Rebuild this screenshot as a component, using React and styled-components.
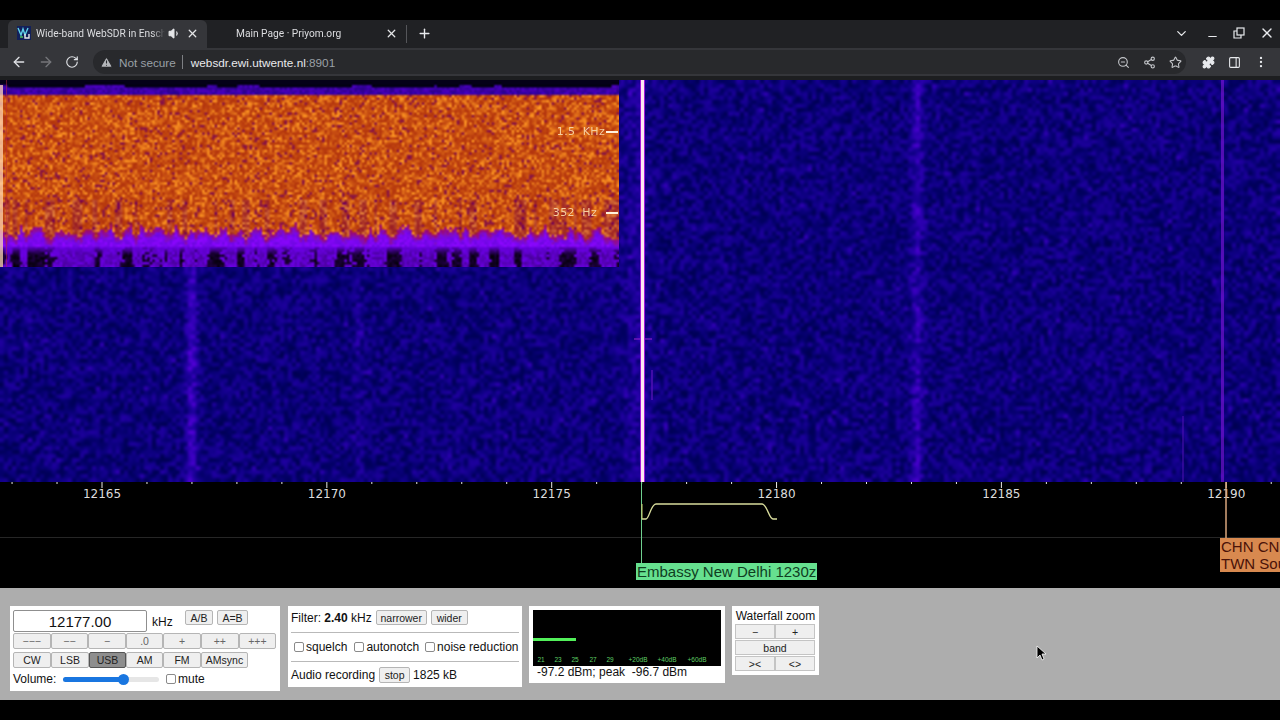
import React, { useEffect, useRef } from 'react';
import styled, { createGlobalStyle } from 'styled-components';
import {
  ArrowLeft,
  ArrowRight,
  RotateCw,
  TriangleAlert,
  ZoomOut,
  Share2,
  Star,
  Puzzle,
  PanelRight,
  EllipsisVertical,
  X,
  Plus,
  ChevronDown,
  Minus,
  Volume1,
} from 'lucide-react';

const GlobalStyle = createGlobalStyle`
  html, body { margin: 0; padding: 0; background: #000; }
  body { font-family: "Liberation Sans", Arial, sans-serif; overflow: hidden; }
  * { box-sizing: border-box; }
`;

const Screen = styled.div`
  position: relative;
  width: 1280px;
  height: 720px;
  display: flex;
  flex-direction: column;
  background: #000;
  padding: 20px 0;
`;

const TabStrip = styled.div`
  height: 28px;
  flex: none;
  display: flex;
  align-items: stretch;
  background: #202124;
  padding-left: 8px;
  color: #dcdde0;
  font-family: Roboto, "Liberation Sans", sans-serif;
  font-size: 10.2px;
`;

const Tab = styled.div`
  width: ${p => p.$width}px;
  display: flex;
  align-items: center;
  padding: 0 8px 2px 9px;
  border-radius: 6px 6px 0 0;
  background: ${p => (p.$active ? '#35363a' : 'transparent')};
`;

const Favicon = styled.svg`
  width: 14px;
  height: 14px;
  flex: none;
  margin-right: 5px;
`;

const TabTitle = styled.span`
  flex: 1;
  overflow: hidden;
  white-space: nowrap;
  margin-left: ${p => p.$indent || 0}px;
  mask-image: linear-gradient(to right, #000 90%, transparent);
`;

const TabIcon = styled.span`
  display: flex;
  margin-left: ${p => p.$gap || 0}px;
  color: #e4e5e8;
`;

const TabDivider = styled.div`
  width: 1px;
  height: 18px;
  align-self: center;
  background: #55565a;
`;

const NewTab = styled.div`
  display: flex;
  align-items: center;
  padding-bottom: 2px;
  margin-left: 10px;
  color: #e8eaed;
`;

const WindowControls = styled.div`
  margin-left: auto;
  display: flex;
  align-items: center;
  gap: 13px;
  padding: 0 5px 2px 0;
  color: #e8eaed;
`;

const MinimizeIcon = styled(Minus)`
  margin: 6px 0 0 4px;
`;

const RestoreIcon = styled.svg`
  width: 14px;
  height: 14px;
`;

const Toolbar = styled.div`
  height: 28px;
  flex: none;
  display: flex;
  align-items: center;
  background: #35363a;
  padding: 0 11px;
  color: #e8eaed;
`;

const NavButton = styled.span`
  display: flex;
  width: 27px;
  color: ${p => (p.$dim ? '#75767a' : '#dfe1e5')};
`;

const Omnibox = styled.div`
  width: 1093px;
  height: 24px;
  margin-left: 1px;
  display: flex;
  align-items: center;
  border-radius: 12px;
  background: #28292c;
  padding: 0 4px 0 7px;
  font-size: 11.75px;
`;

const WarnIcon = styled(TriangleAlert)`
  margin-right: 6px;
`;

const Muted = styled.span`
  color: #9aa0a6;
`;

const Host = styled.span`
  color: #e8eaed;
`;

const UrlSep = styled.span`
  width: 1px;
  height: 14px;
  margin: 0 8px 0 6px;
  background: #7d7f83;
`;

const OmniIcons = styled.div`
  margin-left: auto;
  display: flex;
  align-items: center;
  gap: 13px;
  color: #c4c6ca;
`;

const ToolbarEnd = styled.div`
  display: flex;
  align-items: center;
  gap: 13px;
  margin-left: 16px;
  color: #e8eaed;
`;

const ChromeEdge = styled.div`
  height: 4px;
  flex: none;
  background: #1d1e20;
`;

const Waterfall = styled.div`
  position: relative;
  height: 402px;
  flex: none;
  background: #0a006e;
`;

const FullCanvas = styled.canvas`
  display: block;
  width: 1280px;
  height: 402px;
`;

const AudioCanvas = styled.canvas`
  position: absolute;
  left: 0;
  top: 0;
  width: 619px;
  height: 187px;
`;

const AudioLabel = styled.div`
  position: absolute;
  right: ${p => p.$right}px;
  top: ${p => p.$top}px;
  color: #f6cfa0;
  font-family: "DejaVu Sans", sans-serif;
  font-size: 11px;
  letter-spacing: 0.3px;
  white-space: pre;
  line-height: 13px;
`;

const AudioTick = styled.div`
  position: absolute;
  left: ${p => p.$left}px;
  top: ${p => p.$top}px;
  width: ${p => p.$width}px;
  height: 2px;
  background: #fff2dc;
`;

const ScaleArea = styled.div`
  position: relative;
  height: 106px;
  flex: none;
  background: #000;
`;

const ScaleSvg = styled.svg`
  display: block;
  width: 1280px;
  height: 106px;
`;

const StationTag = styled.div`
  position: absolute;
  overflow: hidden;
  white-space: pre;
  font-size: 15px;
  line-height: 17px;
  left: ${p => p.$left}px;
  top: ${p => p.$top}px;
  padding: ${p => p.$pad};
  color: ${p => p.$color};
  background: ${p => p.$bg};
`;

const ControlBar = styled.div`
  flex: 1;
  display: flex;
  align-items: flex-start;
  gap: 7px;
  background: #adadad;
  padding: 18px 0 0 10px;
  color: #111;
  font-size: 12px;
`;

const Panel = styled.div`
  width: ${p => p.$width}px;
  height: ${p => p.$height}px;
  padding: ${p => p.$pad};
  margin-left: ${p => p.$left || 0}px;
  background: #fff;
  display: flex;
  flex-direction: column;
  flex: none;
`;

const Row = styled.div`
  display: flex;
  align-items: ${p => p.$align || 'center'};
  height: ${p => p.$height}px;
  margin-top: ${p => p.$top || 0}px;
  white-space: nowrap;
`;

const FreqInput = styled.input`
  width: 134px;
  height: 22px;
  border: 1px solid #8f8f8f;
  border-radius: 2px;
  background: #fff;
  text-align: center;
  color: #111;
  font: 15px "Liberation Sans", Arial, sans-serif;
  padding: 0;
  outline: none;
`;

const Unit = styled.span`
  margin: 5px 0 0 5px;
  font-size: 12px;
  width: 33px;
`;

const Btn = styled.button`
  width: ${p => p.$width}px;
  height: ${p => p.$height || 16}px;
  flex: none;
  padding: 0;
  margin-left: ${p => p.$left || 0}px;
  border: 1px solid ${p => (p.$on ? '#555' : '#b5b5b5')};
  border-radius: 2px;
  background: ${p => (p.$on ? '#8e8e8e' : '#efefef')};
  color: ${p => (p.$dim ? '#666' : '#222')};
  font: 10.5px "Liberation Sans", Arial, sans-serif;
  white-space: nowrap;
`;

const VolumeLabel = styled.span`
  width: 50px;
`;

const SliderTrack = styled.div`
  position: relative;
  width: 96px;
  height: 5px;
  border-radius: 3px;
  background: #e6e6e6;
`;

const SliderFill = styled.div`
  height: 5px;
  border-radius: 3px;
  background: #1976e0;
`;

const SliderThumb = styled.div`
  position: absolute;
  top: -3px;
  width: 11px;
  height: 11px;
  border-radius: 50%;
  background: #1976e0;
`;

const Check = styled.input.attrs({ type: 'checkbox' })`
  width: 10px;
  height: 10px;
  margin: 0 2px 0 ${p => p.$left || 0}px;
  flex: none;
  appearance: none;
  border: 1px solid #8a8a8a;
  border-radius: 2px;
  background: #fff;
`;

const Rule = styled.div`
  height: 1px;
  flex: none;
  background: #b9b9b9;
  margin: ${p => p.$margin};
`;

const RecordSize = styled.span`
  margin-left: 3px;
`;

const Meter = styled.div`
  position: relative;
  width: 188px;
  height: 56px;
  flex: none;
  background: #000;
`;

const MeterBar = styled.div`
  position: absolute;
  left: 0;
  top: 28px;
  width: 43px;
  height: 3px;
  background: #52f05a;
`;

const MeterScale = styled.svg`
  position: absolute;
  left: 0;
  top: 44px;
  width: 188px;
  height: 12px;
`;

const MeterText = styled.div`
  margin: 0 0 0 4px;
  height: 13px;
  line-height: 13px;
  white-space: pre;
`;

const ZoomTitle = styled.div`
  text-align: center;
  line-height: 15px;
  white-space: nowrap;
`;

const ZoomGrid = styled.div`
  display: grid;
  grid-template-columns: 40px 40px;
  grid-auto-rows: 15px;
  gap: 1px 0;
`;

const ZoomBtn = styled.button`
  grid-column: ${p => (p.$wide ? '1 / 3' : 'auto')};
  padding: 0;
  border: 1px solid #c4c4c4;
  background: #efefef;
  color: #222;
  font: 10.5px "Liberation Sans", Arial, sans-serif;
`;

const Pointer = styled.svg`
  position: absolute;
  left: 1036px;
  top: 645px;
  width: 10px;
  height: 16px;
`;

// small seeded generator so the noise is the same on every load
const makeRandom = seed => () => {
  seed = (seed * 1664525 + 1013904223) % 4294967296;
  return seed / 4294967296;
};

const clamp = v => Math.max(0, Math.min(255, v));

const bump = (x, center, width) => Math.exp(-((x - center) * (x - center)) / (2 * width * width));

function paintWaterfall(canvas) {
  const ctx = canvas.getContext('2d');
  const rnd = makeRandom(42);
  const scale = 4;
  const w = Math.ceil(1280 / scale);
  const h = Math.ceil(402 / scale);
  const small = document.createElement('canvas');
  small.width = w;
  small.height = h;
  const sctx = small.getContext('2d');
  const img = sctx.createImageData(w, h);
  for (let y = 0; y < h; y++) {
    for (let x = 0; x < w; x++) {
      const px = x * scale;
      const n = rnd();
      let level = 0.1 + n * 0.34;
      if (rnd() < 0.03) level += 0.12;
      level += 0.32 * bump(px, 190, 4);
      level += 0.1 * bump(px, 357, 3);
      level += 0.24 * bump(px, 915, 4);
      level += 0.12 * bump(px, 634, 10);
      const i = (y * w + x) * 4;
      img.data[i] = clamp(level * level * 170 - 3);
      img.data[i + 1] = 0;
      img.data[i + 2] = clamp(62 + level * 215);
      img.data[i + 3] = 255;
    }
  }
  sctx.putImageData(img, 0, 0);
  ctx.imageSmoothingEnabled = true;
  ctx.imageSmoothingQuality = 'high';
  ctx.drawImage(small, 0, 0, 1280, 402);

  // carriers and short traces
  ctx.fillStyle = 'rgba(120,20,210,0.65)';
  ctx.fillRect(1221, 0, 3, 402);
  ctx.fillStyle = 'rgba(80,15,180,0.5)';
  ctx.fillRect(1182, 336, 2, 66);
  ctx.fillStyle = 'rgba(95,20,190,0.6)';
  ctx.fillRect(651, 290, 2, 30);
  ctx.fillStyle = 'rgba(120,25,190,0.7)';
  ctx.fillRect(634, 258, 18, 2);
  ctx.fillStyle = '#a218d8';
  ctx.fillRect(640, 0, 5, 402);
  ctx.fillStyle = '#ffe6f2';
  ctx.fillRect(641, 0, 3, 402);
}

function smoothNoise(rnd, length, step) {
  const knots = [];
  for (let i = 0; i <= length / step + 1; i++) knots.push(rnd());
  const out = [];
  for (let x = 0; x < length; x++) {
    const a = Math.floor(x / step);
    const t = x / step - a;
    out.push(knots[a] * (1 - t) + knots[a + 1] * t);
  }
  return out;
}

function paintAudio(canvas) {
  const ctx = canvas.getContext('2d');
  const rnd = makeRandom(7);
  const w = 619;
  const h = 187;
  const scale = 2.5;
  const sw = Math.ceil(w / scale);
  const sh = Math.ceil(h / scale);
  const wave = smoothNoise(rnd, sw, 2);
  const holes = smoothNoise(rnd, sw, 3);
  const lid = smoothNoise(rnd, sw, 6);
  const small = document.createElement('canvas');
  small.width = sw;
  small.height = sh;
  const sctx = small.getContext('2d');
  const img = sctx.createImageData(sw, sh);
  for (let y = 0; y < sh; y++) {
    const py = y * scale;
    for (let x = 0; x < sw; x++) {
      const i = (y * sw + x) * 4;
      const n = rnd();
      const top = 144 + wave[x] * 14 + (n - 0.5) * 5;
      let r, g, b;
      if (py < 4 + lid[x] * 3) {
        r = 4; g = 0; b = 24;
      } else if (py < 15) {
        r = 45 + n * 30; g = 0; b = 140 + n * 50;
      } else if (py < top) {
        const k = n * n * n;
        r = 178 + n * 22 + k * 50;
        g = 52 + n * 24 + k * 70;
        b = 14 + k * 20;
        if (n < 0.08) {
          r = 142; g = 24; b = 62;
        }
        if (py > 118 && wave[x] > 0.65) {
          r -= 25; g -= 22; b += 22;
        }
      } else if (py < top + 7) {
        r = 160 - (py - top) * 6; g = 12; b = 100 + (py - top) * 18;
      } else if (py < 167) {
        r = 110 + n * 30; g = 6; b = 225 + n * 30;
      } else {
        const depth = Math.min(1, (py - 165) / 9);
        const hole = holes[x] + (n - 0.5) * 0.3 > 0.55 ? depth * (0.95 - n * 0.25) : depth * 0.3 * n;
        r = 105 * (1 - hole); g = 0; b = 225 * (1 - hole);
      }
      img.data[i] = r;
      img.data[i + 1] = g;
      img.data[i + 2] = b;
      img.data[i + 3] = 255;
    }
  }
  sctx.putImageData(img, 0, 0);
  ctx.imageSmoothingEnabled = true;
  ctx.imageSmoothingQuality = 'high';
  ctx.drawImage(small, 0, 0, w, h);
  ctx.fillStyle = 'rgba(255,215,180,0.75)';
  ctx.fillRect(0, 5, 3, 182);
  ctx.fillStyle = 'rgba(190,40,60,0.5)';
  ctx.fillRect(6, 0, 1, 187);
}

const freqLabels = [12165, 12170, 12175, 12180, 12185, 12190];
const tuneRow = ['−−−', '−−', '−', '.0', '+', '++', '+++'];
const modes = [
  { name: 'CW', width: 38 },
  { name: 'LSB', width: 38 },
  { name: 'USB', width: 37, on: true },
  { name: 'AM', width: 37 },
  { name: 'FM', width: 38 },
  { name: 'AMsync', width: 47 },
];
const meterLabels = [
  [8, '21'], [25, '23'], [42, '25'], [60, '27'], [77, '29'],
  [105, '+20dB'], [134, '+40dB'], [164, '+60dB'],
];
const volume = 0.63;

function frequencyToX(f) {
  return 102 + (f - 12165) * 44.97;
}

export default function App() {
  const waterfallRef = useRef(null);
  const audioRef = useRef(null);

  useEffect(() => {
    paintWaterfall(waterfallRef.current);
    paintAudio(audioRef.current);
  }, []);

  const ticks = [];
  for (let f = 12163; f <= 12191; f++) ticks.push(f);

  return (
    <Screen>
      <GlobalStyle />
      <TabStrip>
        <Tab $active $width={199}>
          <Favicon viewBox="0 0 14 14">
            <rect width="14" height="14" fill="#12205a" />
            <path d="M1 2l3 7 2-6 2 6 3-7" stroke="#5fd0e8" strokeWidth="1.4" fill="none" />
            <path d="M8 8v4h4V8" stroke="#e8e8e8" strokeWidth="1.4" fill="none" />
            <path d="M3 11h3" stroke="#55d060" strokeWidth="1.4" />
          </Favicon>
          <TabTitle>Wide-band WebSDR in Enschede</TabTitle>
          <TabIcon $gap={3}><Volume1 size={13} fill="#e4e5e8" /></TabIcon>
          <TabIcon $gap={5}><X size={13} strokeWidth={2.4} /></TabIcon>
        </Tab>
        <Tab $width={199}>
          <TabTitle $indent={20}>Main Page · Priyom.org</TabTitle>
          <TabIcon><X size={13} strokeWidth={2.4} /></TabIcon>
        </Tab>
        <TabDivider />
        <NewTab><Plus size={15} strokeWidth={2.2} /></NewTab>
        <WindowControls>
          <ChevronDown size={15} />
          <MinimizeIcon size={13} />
          <RestoreIcon viewBox="0 0 14 14" fill="none" stroke="currentColor" strokeWidth="1.2">
            <rect x="5" y="2" width="7" height="7" />
            <path d="M5 5H2v7h7V9" />
          </RestoreIcon>
          <X size={16} />
        </WindowControls>
      </TabStrip>
      <Toolbar>
        <NavButton><ArrowLeft size={16} /></NavButton>
        <NavButton $dim><ArrowRight size={16} /></NavButton>
        <NavButton><RotateCw size={14} /></NavButton>
        <Omnibox>
          <WarnIcon size={13} color="#b4b6ba" fill="#b4b6ba" stroke="#28292c" />
          <Muted>Not secure</Muted>
          <UrlSep />
          <Host>websdr.ewi.utwente.nl</Host>
          <Muted>:8901</Muted>
          <OmniIcons>
            <ZoomOut size={13} />
            <Share2 size={13} />
            <Star size={13} />
          </OmniIcons>
        </Omnibox>
        <ToolbarEnd>
          <Puzzle size={13} fill="#e8eaed" />
          <PanelRight size={13} />
          <EllipsisVertical size={14} />
        </ToolbarEnd>
      </Toolbar>
      <ChromeEdge />
      <Waterfall>
        <FullCanvas ref={waterfallRef} width={1280} height={402} />
        <AudioCanvas ref={audioRef} width={619} height={187} />
        <AudioLabel $right={675} $top={45}>{'1.5  KHz'}</AudioLabel>
        <AudioTick $left={606} $top={51} $width={12} />
        <AudioLabel $right={683} $top={126}>{'352  Hz'}</AudioLabel>
        <AudioTick $left={606} $top={132} $width={12} />
      </Waterfall>
      <ScaleArea>
        <ScaleSvg viewBox="0 0 1280 106">
          {ticks.map(f => (
            <line
              key={f}
              x1={frequencyToX(f)}
              x2={frequencyToX(f)}
              y1="0"
              y2={(f - 12165) % 5 === 0 ? 6 : 2}
              stroke="#e8e8e8"
            />
          ))}
          {freqLabels.map(f => (
            <text
              key={f}
              x={frequencyToX(f)}
              y="16"
              fill="#dcdcdc"
              fontFamily="DejaVu Sans, sans-serif"
              fontSize="12"
              textAnchor="middle"
            >
              {f}
            </text>
          ))}
          <line x1="0" x2="1280" y1="55.5" y2="55.5" stroke="#262626" />
          <line x1="641.5" x2="641.5" y1="0" y2="82" stroke="#6fd08f" />
          <line x1="1226" x2="1226" y1="0" y2="58" stroke="#d9a67c" strokeWidth="1.5" />
          <path
            d="M642 37H646C649 37 651 22 656 22H762C767 22 769 37 773 37H777"
            fill="none"
            stroke="#d8dc9c"
            strokeWidth="1.3"
          />
          <line x1="642" x2="642" y1="22" y2="37" stroke="#d8d070" />
        </ScaleSvg>
        <StationTag $left={636} $top={81} $pad="0 1px" $color="#0f3d1f" $bg="#66e08f">
          Embassy New Delhi 1230z
        </StationTag>
        <StationTag $left={1220} $top={56} $pad="0 0 0 1px" $color="#4a1208" $bg="#d8894f">
          {'CHN CNR1\nTWN Sound'}
        </StationTag>
      </ScaleArea>
      <ControlBar>
        <Panel $width={270} $height={85} $pad="4px 3px">
          <Row $height={22} $align="flex-start">
            <FreqInput readOnly value="12177.00" />
            <Unit>kHz</Unit>
            <Btn $width={28} $height={15}>A/B</Btn>
            <Btn $width={31} $height={15} $left={4}>A=B</Btn>
          </Row>
          <Row $height={16} $top={1}>
            {tuneRow.map(label => <Btn key={label} $width={37.6} $dim>{label}</Btn>)}
          </Row>
          <Row $height={16} $top={3}>
            {modes.map(m => <Btn key={m.name} $width={m.width} $on={m.on}>{m.name}</Btn>)}
          </Row>
          <Row $height={17} $top={3}>
            <VolumeLabel>Volume:</VolumeLabel>
            <SliderTrack>
              <SliderFill style={{ width: `${volume * 100}%` }} />
              <SliderThumb style={{ left: `${(volume - 0.06) * 100}%` }} />
            </SliderTrack>
            <Check $left={7} />
            mute
          </Row>
        </Panel>
        <Panel $width={234} $height={81} $pad="4px 3px" $left={1}>
          <Row $height={15}>
            <span>Filter: <b>2.40</b> kHz</span>
            <Btn $width={51} $height={15} $left={4}>narrower</Btn>
            <Btn $width={37} $height={15} $left={4}>wider</Btn>
          </Row>
          <Rule $margin="7px 0 0" />
          <Row $height={28}>
            <Check $left={3} />squelch
            <Check $left={7} />autonotch
            <Check $left={6} />noise reduction
          </Row>
          <Rule $margin="0" />
          <Row $height={17} $top={4}>
            Audio recording
            <Btn $width={31} $height={16} $left={4}>stop</Btn>
            <RecordSize>1825 kB</RecordSize>
          </Row>
        </Panel>
        <Panel $width={196} $height={77} $pad="4px">
          <Meter>
            <MeterBar />
            <MeterScale viewBox="0 0 188 12">
              {meterLabels.map(([x, label]) => (
                <text
                  key={label}
                  x={x}
                  y="7.5"
                  fontSize="6.5"
                  fontFamily="Liberation Sans, sans-serif"
                  fill="#5fce66"
                  textAnchor="middle"
                >
                  {label}
                </text>
              ))}
            </MeterScale>
          </Meter>
          <MeterText>{'-97.2 dBm; peak  -96.7 dBm'}</MeterText>
        </Panel>
        <Panel $width={87} $height={69} $pad="3px">
          <ZoomTitle>Waterfall zoom</ZoomTitle>
          <ZoomGrid>
            <ZoomBtn>−</ZoomBtn>
            <ZoomBtn>+</ZoomBtn>
            <ZoomBtn $wide>band</ZoomBtn>
            <ZoomBtn>&gt;&lt;</ZoomBtn>
            <ZoomBtn>&lt;&gt;</ZoomBtn>
          </ZoomGrid>
        </Panel>
      </ControlBar>
      <Pointer viewBox="0 0 10 16">
        <path d="M1 1v12l3-3 2 5 2-1-2-5h4z" fill="#000" stroke="#fff" strokeWidth="0.8" />
      </Pointer>
    </Screen>
  );
}
